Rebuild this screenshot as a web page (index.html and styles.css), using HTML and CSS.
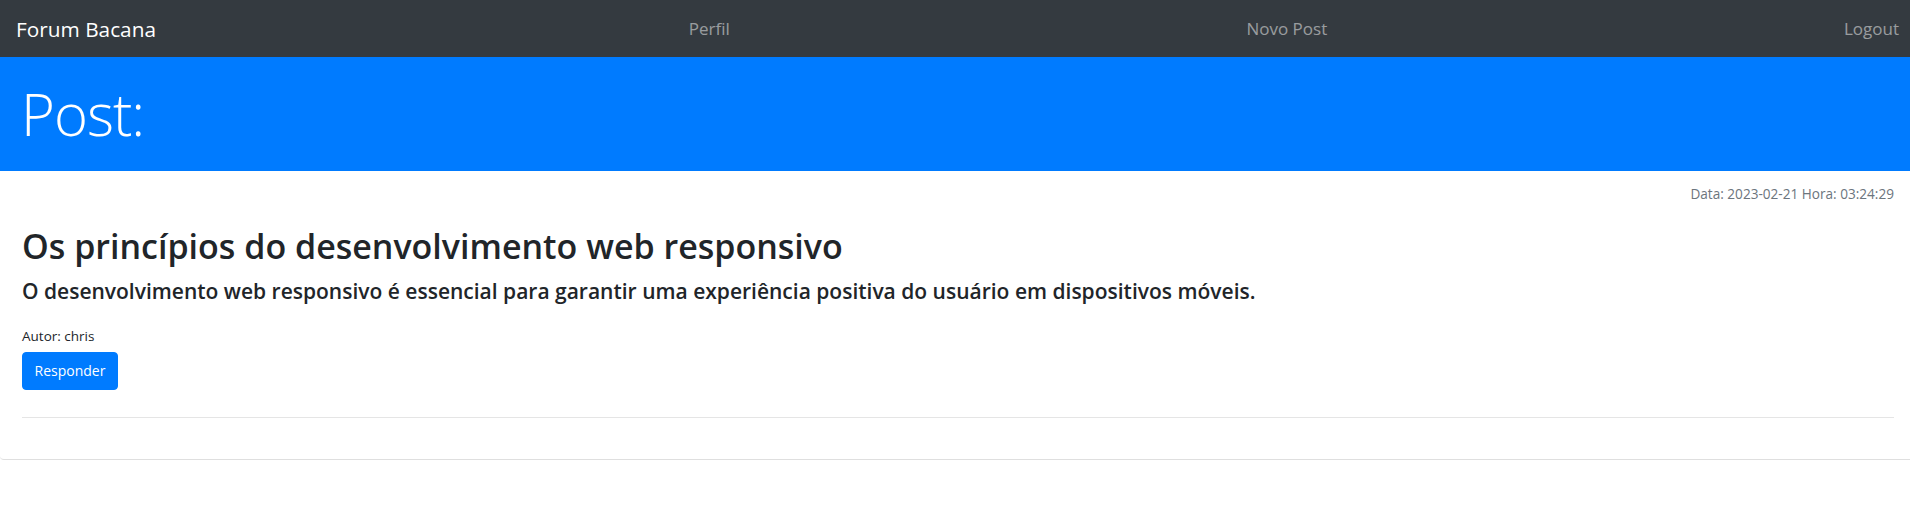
FILE: index.html
```html
<!DOCTYPE html>
<html lang="pt">
<head>
<meta charset="utf-8">
<title>Forum Bacana</title>
<link rel="stylesheet" href="styles.css">
</head>
<body>
<nav class="navbar">
  <a class="brand" href="#">Forum Bacana</a>
  <a class="nav-link" href="#">Perfil</a>
  <a class="nav-link" href="#">Novo Post</a>
  <a class="nav-link" href="#">Logout</a>
</nav>
<header class="jumbotron">
  <h1 class="display">Post:</h1>
</header>
<main class="card">
  <div class="card-body">
    <p class="meta">Data: 2023-02-21 Hora: 03:24:29</p>
    <h2 class="title">Os princípios do desenvolvimento web responsivo</h2>
    <h5 class="subtitle">O desenvolvimento web responsivo é essencial para garantir uma experiência positiva do usuário em dispositivos móveis.</h5>
    <p class="author">Autor: chris</p>
    <button class="btn" type="button">Responder</button>
    <hr class="divider">
  </div>
</main>
</body>
</html>
```

FILE: styles.css
```css
* { box-sizing: border-box; }

html, body {
  margin: 0;
  padding: 0;
  background: #fff;
  overflow-x: hidden;
}

body {
  font-family: "Open Sans", "Noto Sans", "DejaVu Sans", sans-serif;
  color: #212529;
  font-size: 16px;
  line-height: 1.5;
}

a { text-decoration: none; }

.navbar {
  display: flex;
  justify-content: space-between;
  align-items: center;
  height: 57px;
  padding: 0 11px 0 16px;
  background: #343a40;
}

.brand {
  margin-right: 16px;
  color: #fff;
  font-size: 20.8px;
  line-height: 30px;
}

.nav-link {
  color: rgba(255, 255, 255, 0.5);
  font-size: 17px;
  line-height: 24px;
}

.jumbotron {
  background: #007bff;
  height: 114px;
  display: flex;
  align-items: center;
  padding: 0 21px;
}

.display {
  margin: 0;
  color: #fff;
  font-weight: 300;
  font-size: 58px;
  line-height: 1;
  letter-spacing: -1px;
}

.card {
  border-bottom: 1px solid rgba(0, 0, 0, 0.125);
  border-bottom-left-radius: 4px;
  padding-bottom: 41px;
}

.card-body {
  padding: 13px 16px 0 22px;
}

.meta {
  margin: 0;
  text-align: right;
  color: #6c757d;
  font-size: 13.6px;
  line-height: 19px;
}

.title {
  margin: 24px 0 0;
  font-size: 34px;
  font-weight: 600;
  line-height: 38px;
}

.subtitle {
  margin: 14px 0 0;
  font-size: 21px;
  font-weight: 600;
  line-height: 24px;
}

.author {
  margin: 24px 0 0;
  font-size: 13.5px;
  line-height: 19px;
}

.btn {
  display: block;
  margin-top: 6px;
  width: 96px;
  height: 38px;
  padding: 0;
  border: 1px solid #007bff;
  border-radius: 4px;
  background: #007bff;
  color: #fff;
  font-family: inherit;
  font-size: 14px;
  line-height: 20px;
}

.divider {
  margin: 27px 0 0;
  border: 0;
  border-top: 1px solid rgba(0, 0, 0, 0.1);
}
```
